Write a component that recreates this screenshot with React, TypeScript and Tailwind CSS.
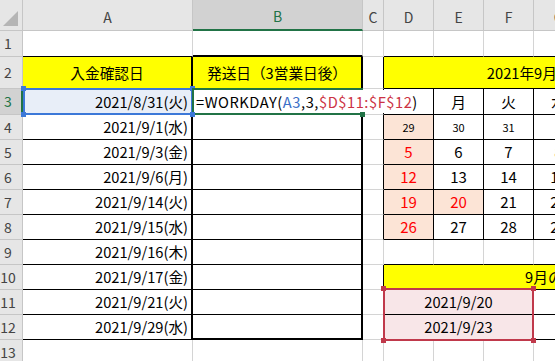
import type { ReactNode } from 'react';

type Line = 'g' | 'k' | 'K' | 'h' | 'G' | 'n';

const RIGHT: Record<Line, string> = {
  g: 'border-r border-r-[#d4d4d4]',
  k: 'border-r border-r-black',
  K: 'border-r-2 border-r-black',
  h: 'border-r border-r-[#c6c6c6]',
  G: 'border-r-2 border-r-[#217346]',
  n: '',
};

const BOTTOM: Record<Line, string> = {
  g: 'border-b border-b-[#d4d4d4]',
  k: 'border-b border-b-black',
  K: 'border-b-2 border-b-black',
  h: 'border-b border-b-[#c6c6c6]',
  G: 'border-b-2 border-b-[#217346]',
  n: '',
};

const COLS = ['A', 'B', 'C', 'D', 'E', 'F', 'G', 'H', 'I', 'J'];

const DATES = [
  '2021/8/31(火)',
  '2021/9/1(水)',
  '2021/9/3(金)',
  '2021/9/6(月)',
  '2021/9/14(火)',
  '2021/9/15(水)',
  '2021/9/16(木)',
  '2021/9/17(金)',
  '2021/9/21(火)',
  '2021/9/29(水)',
];

// D3 ("日") sits under the formula being typed in B3, so it is left blank here
const CALENDAR: (string | number)[][] = [
  ['', '月', '火', '水', '木', '金', '土'],
  [29, 30, 31, 1, 2, 3, 4],
  [5, 6, 7, 8, 9, 10, 11],
  [12, 13, 14, 15, 16, 17, 18],
  [19, 20, 21, 22, 23, 24, 25],
  [26, 27, 28, 29, 30, 1, 2],
];

const HOLIDAYS = [20, 23];

function Cell({
  r = 'g',
  b = 'g',
  className = '',
  children,
}: {
  r?: Line;
  b?: Line;
  className?: string;
  children?: ReactNode;
}) {
  return (
    <div className={`${RIGHT[r]} ${BOTTOM[b]} flex items-center overflow-hidden whitespace-nowrap ${className}`}>
      {children}
    </div>
  );
}

function RowHead({ n, active = false }: { n: number; active?: boolean }) {
  return (
    <Cell
      r={active ? 'G' : 'h'}
      b="h"
      className={active ? 'bg-[#d2d2d2] text-[#217346]' : 'bg-[#e6e6e6] text-[#444444]'}
    >
      <span className="w-[16px] text-center text-[14px]">{n}</span>
    </Cell>
  );
}

function CalendarCell({ row, col }: { row: number; col: number }) {
  const v = CALENDAR[row][col];
  if (typeof v === 'string') {
    return (
      <Cell r="k" b="k" className="justify-center">
        {v}
      </Cell>
    );
  }
  const otherMonth = (row === 1 && v > 20) || (row === 5 && v < 10);
  const sunday = col === 0;
  const holiday = !otherMonth && HOLIDAYS.includes(v);
  const pink = sunday || holiday;
  const red = pink && !otherMonth;
  return (
    <Cell
      r="k"
      b="k"
      className={`justify-center ${pink ? 'bg-[#fce4d6]' : ''} ${red ? 'text-[#ff0000]' : ''} ${otherMonth ? 'text-[11px]' : 'text-[15px]'}`}
    >
      {v}
    </Cell>
  );
}

function Handle({ className }: { className: string }) {
  return <div className={`absolute h-[5px] w-[5px] ${className}`} />;
}

export default function App() {
  return (
    <div className="relative h-[361px] w-[555px] overflow-hidden bg-white font-['Noto_Sans_CJK_JP',sans-serif] text-[14.67px] text-black">
      <div className="grid w-[733px] grid-cols-[23px_170px_170px_21px_50px_50px_50px_50px_50px_50px_50px] grid-rows-[31px_26px_32px_26px_repeat(10,25px)]">
        {/* column headers */}
        <Cell r="h" b="h" className="items-end justify-end bg-[#e6e6e6] pb-[4px] pr-[4px]">
          <svg width="15" height="15" viewBox="0 0 15 15">
            <polygon points="15,0 15,15 0,15" fill="#b5b5b5" />
          </svg>
        </Cell>
        {COLS.map((c) => (
          <Cell
            key={c}
            r="h"
            b={c === 'B' ? 'G' : 'h'}
            className={`justify-center pt-[4px] text-[14px] ${c === 'B' ? 'bg-[#d2d2d2] text-[#217346]' : 'bg-[#e6e6e6] text-[#444444]'}`}
          >
            {c}
          </Cell>
        ))}

        {/* row 1 */}
        <RowHead n={1} />
        <Cell b="k" />
        <Cell b="K" />
        <Cell />
        {[0, 1, 2, 3, 4, 5, 6].map((i) => (
          <Cell key={i} b="k" />
        ))}

        {/* row 2 */}
        <RowHead n={2} />
        <Cell r="K" b="k" className="justify-center bg-[#ffff00]">
          入金確認日
        </Cell>
        <Cell r="K" b="k" className="justify-center bg-[#ffff00]">
          発送日（3営業日後）
        </Cell>
        <Cell r="k" />
        <Cell r="k" b="k" className="col-span-7 justify-center bg-[#ffff00]">
          2021年9月カレンダー
        </Cell>

        {/* rows 3 - 12 */}
        {DATES.map((d, i) => {
          const row = i + 3;
          const calRow = row - 3;
          return [
            <RowHead key={`h${row}`} n={row} active={row === 3} />,
            <Cell
              key={`a${row}`}
              r="K"
              b="k"
              className={`justify-end pr-[3px] ${row === 3 ? 'bg-[#e8eef8]' : ''}`}
            >
              {d}
            </Cell>,
            <Cell key={`b${row}`} r="K" b={row === 12 ? 'K' : 'k'} />,
            <Cell key={`c${row}`} r={row === 9 ? 'g' : 'k'} />,
            ...(row <= 8
              ? [0, 1, 2, 3, 4, 5, 6].map((c) => <CalendarCell key={`d${row}${c}`} row={calRow} col={c} />)
              : row === 9
                ? [0, 1, 2, 3, 4, 5, 6].map((c) => <Cell key={`d${row}${c}`} b="k" />)
                : row === 10
                  ? [
                      <Cell key="d10" r="k" b="k" className="col-span-7 justify-center bg-[#ffff00]">
                        9月の祝日
                      </Cell>,
                    ]
                  : [
                      <Cell key={`d${row}`} r="k" b="k" className="col-span-3 justify-center bg-[#f8e6e8]">
                        {row === 11 ? '2021/9/20' : '2021/9/23'}
                      </Cell>,
                      <Cell key={`g${row}`} r="k" b="k" className="col-span-4" />,
                    ]),
          ];
        })}

        {/* row 13 */}
        <RowHead n={13} />
        {COLS.map((c) => (
          <Cell key={c} />
        ))}
      </div>

      {/* reference A3 */}
      <div className="absolute left-[23px] top-[88px] h-[27px] w-[170px] border-2 border-[#3c78d8]" />
      <Handle className="left-[21px] top-[86px] bg-[#3c78d8]" />
      <Handle className="left-[190px] top-[86px] bg-[#3c78d8]" />
      <Handle className="left-[21px] top-[112px] bg-[#3c78d8]" />

      {/* active cell B3 */}
      <div className="absolute left-[192px] top-[88px] h-[27px] w-[171px] border-2 border-[#217346]" />

      {/* formula being edited in B3, drawn over the cell edge */}
      <div className="absolute left-[194px] top-[90px] flex h-[23px] w-[238px] items-center bg-white pl-[2px] tracking-[0.55px] whitespace-nowrap">
        <span>=WORKDAY(</span>
        <span className="text-[#3a6fc7]">A3</span>
        <span>,3,</span>
        <span className="text-[#cc3344]">$D$11:$F$12</span>
        <span>)</span>
      </div>
      <Handle className="left-[190px] top-[112px] bg-[#3c78d8]" />
      <Handle className="left-[360px] top-[112px] bg-[#217346]" />

      {/* reference D11:F12 */}
      <div className="absolute left-[383px] top-[288px] h-[53px] w-[151px] border-2 border-[#c0394b]" />
      <Handle className="left-[381px] top-[286px] bg-[#c0394b]" />
      <Handle className="left-[531px] top-[286px] bg-[#c0394b]" />
      <Handle className="left-[381px] top-[338px] bg-[#c0394b]" />
      <Handle className="left-[531px] top-[338px] bg-[#c0394b]" />
    </div>
  );
}
